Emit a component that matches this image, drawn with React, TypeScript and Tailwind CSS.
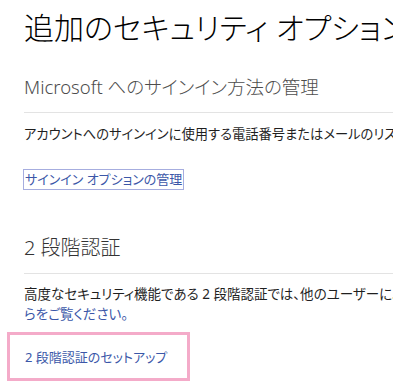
const fontStack = "font-['Noto_Sans','Noto_Sans_CJK_JP',sans-serif] [font-feature-settings:'palt']"

export default function App() {
  return (
    <div className={`h-[390px] w-[393px] overflow-hidden bg-white text-[#1f1f1f] ${fontStack}`}>
      <div className="flex w-[700px] flex-col pl-[24px]">
        <h1 className="mt-[8px] whitespace-nowrap text-[30px] leading-[40px] font-light text-black">
          追加のセキュリティ オプション
        </h1>

        <h2 className="mt-[25px] whitespace-nowrap text-[18.5px] leading-[28px] font-light text-[#4d4d4d]">
          Microsoft へのサインイン方法の管理
        </h2>
        <div className="mt-[11px] h-px bg-[#e3e3e3]" />
        <p className="mt-[11px] whitespace-nowrap text-[13.3px] leading-[20px]">
          アカウントへのサインインに使用する電話番号またはメールのリストを管理します。
        </p>
        <div className="mt-[22px]">
          <a
            href="#"
            className="inline-block -ml-[1px] whitespace-nowrap border border-[#a6addf] px-[1px] text-[13px] leading-[19px] text-[#3b57a8]"
          >
            サインイン オプションの管理
          </a>
        </div>

        <h2 className="mt-[44px] whitespace-nowrap text-[20px] leading-[28px] font-light text-[#333]">
          2 段階認証
        </h2>
        <div className="mt-[11px] h-px bg-[#e3e3e3]" />
        <p className="mt-[10px] text-[13.5px] leading-[20px]">
          <span className="block whitespace-nowrap">
            高度なセキュリティ機能である 2 段階認証では、他のユーザーによるアカウントへのアクセスを防ぐことができます。詳しくは
            <a href="#" className="text-[#3b57a8]">こち</a>
          </span>
          <a href="#" className="block whitespace-nowrap text-[#3b57a8]">
            らをご覧ください。
          </a>
        </p>
        <div className="-ml-[17px] mt-[8px] flex h-[49px] w-[183px] items-center border-[3px] border-[#f4abc9] pl-[15px]">
          <a href="#" className="whitespace-nowrap text-[13px] leading-[20px] text-[#3b57a8]">
            2 段階認証のセットアップ
          </a>
        </div>
      </div>
    </div>
  )
}
